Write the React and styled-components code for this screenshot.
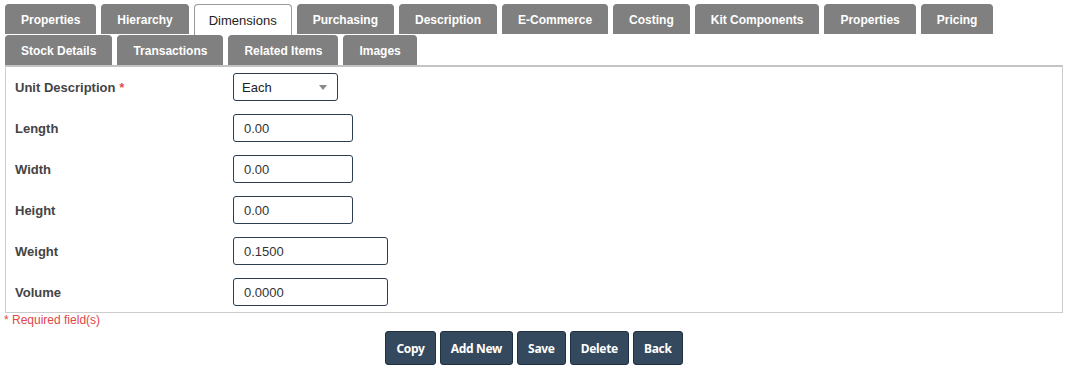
import React from 'react'
import styled, { createGlobalStyle } from 'styled-components'

const Global = createGlobalStyle`
body {
  margin: 0;
  background: #fff;
  font-family: "Liberation Sans", Arial, sans-serif;
}
`

const tabs = [
  'Properties', 'Hierarchy', 'Dimensions', 'Purchasing', 'Description', 'E-Commerce',
  'Costing', 'Kit Components', 'Properties', 'Pricing', 'Stock Details', 'Transactions',
  'Related Items', 'Images',
]

const fields = [
  { label: 'Unit Description', required: true, select: 'Each' },
  { label: 'Length', value: '0.00', width: 120 },
  { label: 'Width', value: '0.00', width: 120 },
  { label: 'Height', value: '0.00', width: 120 },
  { label: 'Weight', value: '0.1500', width: 155 },
  { label: 'Volume', value: '0.0000', width: 155 },
]

function App() {
  return (
    <Page>
      <Global />
      <TabBar>
        {tabs.map((t, i) => (
          <Tab key={i} active={i === 2}>{t}</Tab>
        ))}
      </TabBar>
      <Panel>
        {fields.map((f) => (
          <Row key={f.label}>
            <Label>
              {f.label}
              {f.required && <Star>*</Star>}
            </Label>
            {f.select ? (
              <Select>
                {f.select}
                <Caret />
              </Select>
            ) : (
              <Input style={{ width: f.width }} value={f.value} readOnly />
            )}
          </Row>
        ))}
      </Panel>
      <Required>* Required field(s)</Required>
      <Actions>
        <Button>Copy</Button>
        <Button>Add New</Button>
        <Button>Save</Button>
        <Button>Delete</Button>
        <Button>Back</Button>
      </Actions>
    </Page>
  )
}

export default App

const Page = styled.div`
width: 1058px;
padding: 4px 0 0 5px;
`

const TabBar = styled.div`
display: flex;
flex-wrap: wrap;
column-gap: 5px;
row-gap: 1px;
`

const Tab = styled.div`
box-sizing: border-box;
display: flex;
align-items: center;
padding: 0 ${(p) => (p.active ? '14px' : '15px')};
border-radius: 4px 4px 0 0;
font-size: ${(p) => (p.active ? '13px' : '12px')};
font-weight: ${(p) => (p.active ? 'normal' : 'bold')};
color: ${(p) => (p.active ? '#222' : '#fff')};
background: ${(p) => (p.active ? '#fff' : '#808080')};
border: 1px solid ${(p) => (p.active ? '#9a9a9a' : '#808080')};
border-bottom: none;
margin-bottom: ${(p) => (p.active ? '-1px' : '0')};
height: ${(p) => (p.active ? '31px' : '30px')};
position: relative;
z-index: ${(p) => (p.active ? 1 : 0)};
`

const Panel = styled.div`
border: 1px solid #ccc;
border-top: 2px solid #c4c4c4;
padding: 6px 9px 6px;
display: flex;
flex-direction: column;
gap: 13px;
`

const Row = styled.div`
display: flex;
align-items: center;
height: 28px;
`

const Label = styled.div`
width: 218px;
font-size: 13px;
font-weight: bold;
color: #444;
`

const Star = styled.span`
color: #e0464a;
margin-left: 4px;
font-size: 12px;
`

const Select = styled.div`
width: 105px;
height: 28px;
box-sizing: border-box;
border: 1px solid #2c3e50;
border-radius: 3px;
display: flex;
align-items: center;
justify-content: space-between;
padding: 0 10px 0 8px;
font-size: 13px;
color: #222;
`

const Caret = styled.span`
width: 0;
height: 0;
border-left: 4px solid transparent;
border-right: 4px solid transparent;
border-top: 5px solid #888;
`

const Input = styled.input`
height: 28px;
box-sizing: border-box;
border: 1px solid #2c3e50;
border-radius: 3px;
padding: 0 10px;
font-family: "Liberation Sans", Arial, sans-serif;
font-size: 13px;
color: #333;
outline: none;
`

const Required = styled.div`
color: #e0464a;
font-size: 12px;
margin: 0 0 0 -1px;
height: 14px;
line-height: 14px;
`

const Actions = styled.div`
display: flex;
justify-content: center;
gap: 4px;
margin-top: 4px;
`

const Button = styled.button`
height: 34px;
padding: 0 10px;
border: 1px solid #22313f;
border-radius: 3px;
background: #34495e;
color: #fff;
font-family: "Noto Sans", sans-serif;
font-weight: bold;
font-size: 12px;
letter-spacing: -0.3px;
cursor: pointer;
`
